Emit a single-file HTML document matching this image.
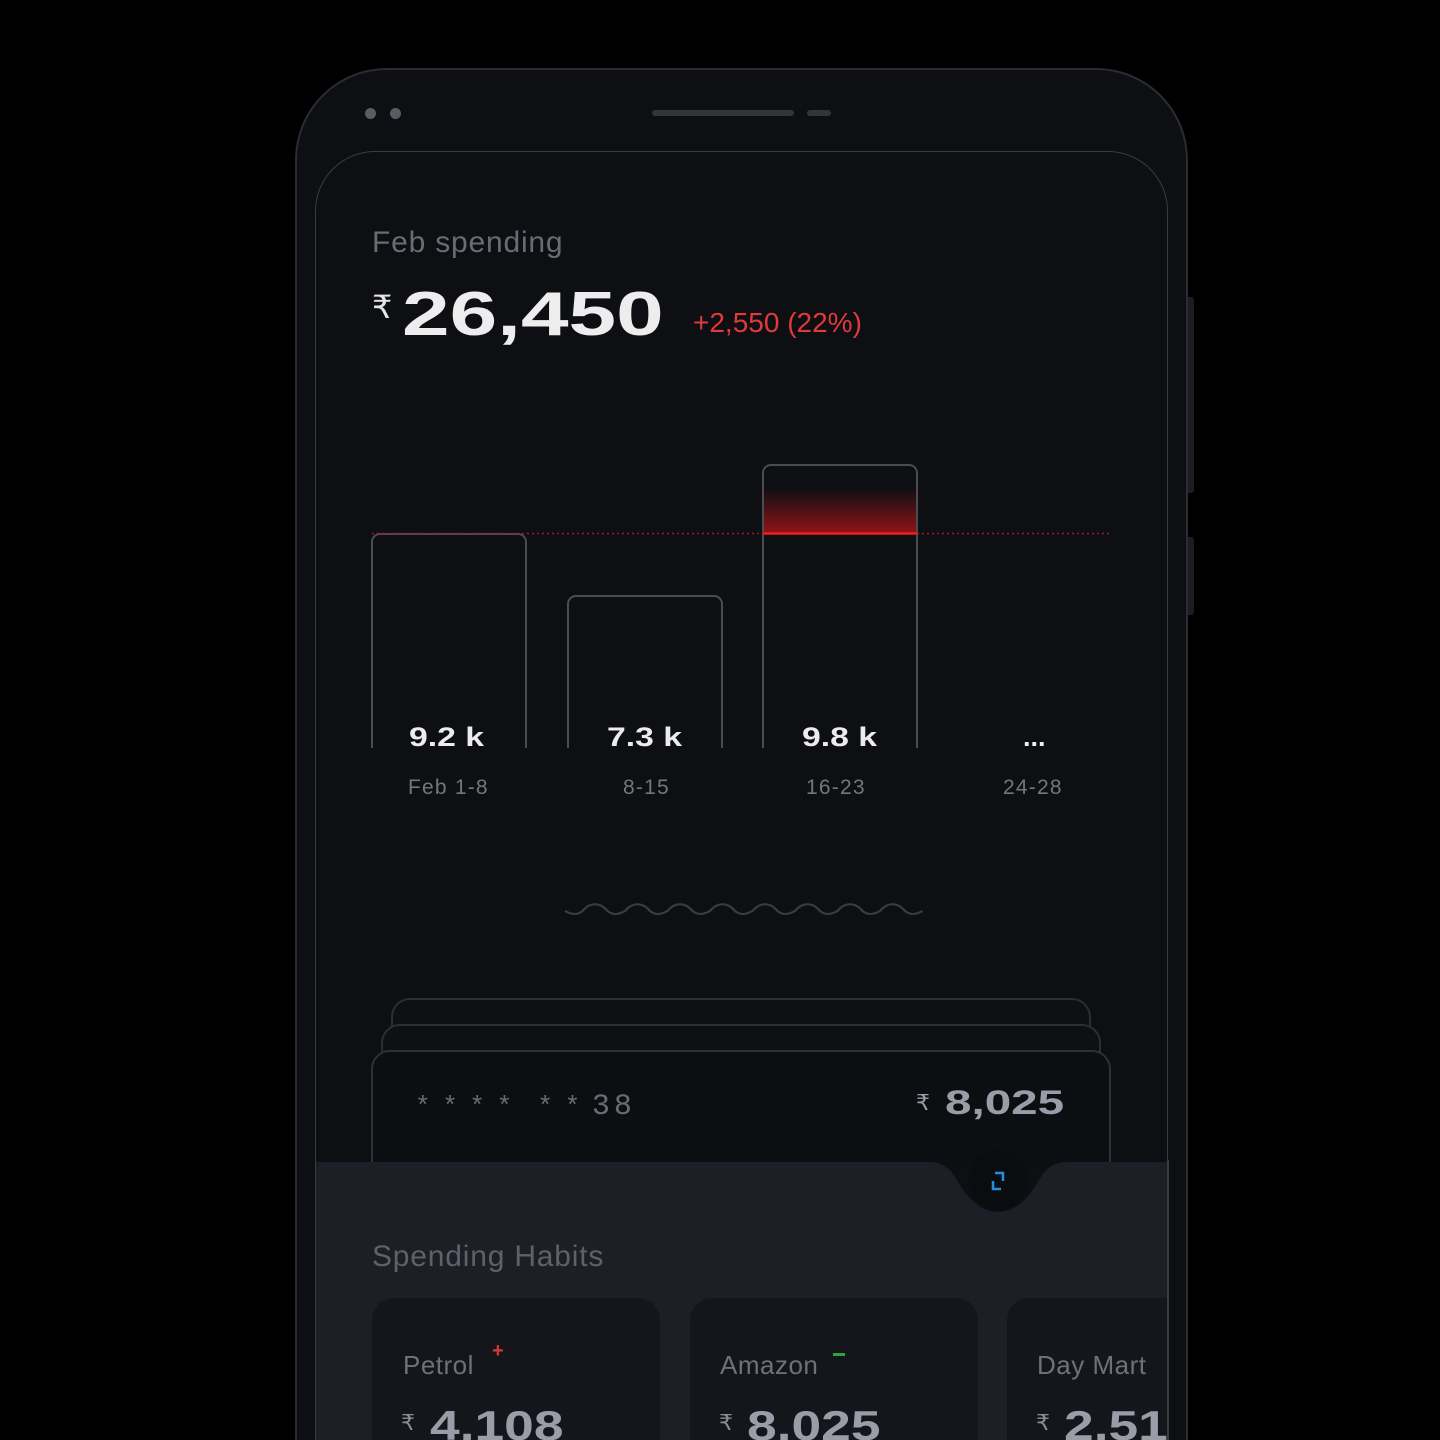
<!DOCTYPE html>
<html><head><meta charset="utf-8"><style>
*{margin:0;padding:0;box-sizing:border-box}
html{width:1440px;height:1440px;overflow:hidden;background:#000}
body{width:1440px;height:1440px;background:#000;position:relative;overflow:hidden;font-family:"Liberation Sans",sans-serif}
.a{position:absolute}
.wide{display:inline-block;transform-origin:left center;font-weight:bold}
</style></head><body>
<div class="a" style="left:295px;top:68px;width:893px;height:1372px;border:2px solid #2a2c32;border-bottom:none;border-radius:92px 92px 0 0;background:#0e0f13"></div>
<div class="a" style="left:1188px;top:297px;width:6px;height:196px;background:#1c1d22;border-radius:0 3px 3px 0"></div>
<div class="a" style="left:1188px;top:537px;width:6px;height:78px;background:#1c1d22;border-radius:0 3px 3px 0"></div>
<div class="a" style="left:365px;top:108px;width:11px;height:11px;border-radius:50%;background:#5a5c63"></div>
<div class="a" style="left:390px;top:108px;width:11px;height:11px;border-radius:50%;background:#5a5c63"></div>
<div class="a" style="left:652px;top:110px;width:142px;height:6px;border-radius:3px;background:#33353b"></div>
<div class="a" style="left:807px;top:110px;width:24px;height:6px;border-radius:3px;background:#33353b"></div>
<div class="a" style="left:315px;top:151px;width:853px;height:1289px;border:1.5px solid #3a3c43;border-bottom:none;border-radius:60px 60px 0 0;background:#0e0f13"></div>
<div class="a" style="left:372px;top:226px;font-size:30px;color:#6a6c74;letter-spacing:0.8px">Feb spending</div>
<div class="a" style="left:372px;top:288px;font-size:32px;color:#e6e6e8">₹</div>
<div class="a" style="left:402px;top:279px;font-size:62px;color:#ededee;line-height:72px"><span class="wide" style="transform:scaleX(1.38)">26,450</span></div>
<div class="a" style="left:693px;top:307px;font-size:28px;color:#e0393b">+2,550 (22%)</div>

<svg class="a" style="left:0;top:0" width="1440" height="1440">
<defs><linearGradient id="g" x1="0" y1="0" x2="0" y2="1"><stop offset="0" stop-color="#c01518" stop-opacity="0"/><stop offset="1" stop-color="#c01518" stop-opacity="0.75"/></linearGradient></defs>
<path d="M372 748V542a8 8 0 0 1 8-8h138a8 8 0 0 1 8 8v206" fill="none" stroke="#4a4c53" stroke-width="2"/>
<path d="M568 748V604a8 8 0 0 1 8-8h138a8 8 0 0 1 8 8v144" fill="none" stroke="#4a4c53" stroke-width="2"/>
<path d="M763 748V473a8 8 0 0 1 8-8h138a8 8 0 0 1 8 8v275" fill="none" stroke="#4a4c53" stroke-width="2"/>
<rect x="764" y="488" width="152" height="46" fill="url(#g)"/>
<line x1="372" y1="533.5" x2="1112" y2="533.5" stroke="#a31a1c" stroke-width="1.5" stroke-dasharray="2 3"/>
<line x1="763" y1="533.5" x2="917" y2="533.5" stroke="#f01e22" stroke-width="2.5"/>
<g transform="translate(565 0) scale(1.25 1) translate(-565 0)">
<path d="M565 911 c6 4 10 4 14 0 c6 -9 14 -9 20 0 c4 4 8 4 14 0 c6 -9 14 -9 20 0 c4 4 8 4 14 0 c6 -9 14 -9 20 0 c4 4 8 4 14 0 c6 -9 14 -9 20 0 c4 4 8 4 14 0 c6 -9 14 -9 20 0 c4 4 8 4 14 0 c6 -9 14 -9 20 0 c4 4 8 4 14 0 c6 -9 14 -9 20 0 c4 4 8 4 14 0 c6 -9 14 -9 20 0 c4 4 8 4 14 0" fill="none" stroke="#3a3c43" stroke-width="2"/>
</g>
<path d="M392 1160V1017a18 18 0 0 1 18-18h662a18 18 0 0 1 18 18v143" fill="#0f1014" stroke="#2c2e34" stroke-width="2"/>
<path d="M382 1160V1043a18 18 0 0 1 18-18h682a18 18 0 0 1 18 18v117" fill="#0f1014" stroke="#2c2e34" stroke-width="2"/>
<path d="M372 1165V1069a18 18 0 0 1 18-18h702a18 18 0 0 1 18 18v96" fill="#0d0e12" stroke="#2e3036" stroke-width="2"/>
<path d="M316 1162H930q18 0 28 20q18 30 40 30q22 0 40 -30q10 -20 28 -20H1167V1440H316Z" fill="#1e1f26"/>
<circle cx="998" cy="1180" r="30" fill="#0b0c10"/>
<path d="M995 1173h8v8M1001 1189h-8v-8" fill="none" stroke="#1f8fe0" stroke-width="2.5"/>
</svg>
<div class="a" style="left:409px;top:722px;font-size:27px;color:#ececee"><span class="wide" style="transform:scaleX(1.25)">9.2 k</span></div>
<div class="a" style="left:607px;top:722px;font-size:27px;color:#ececee"><span class="wide" style="transform:scaleX(1.25)">7.3 k</span></div>
<div class="a" style="left:802px;top:722px;font-size:27px;color:#ececee"><span class="wide" style="transform:scaleX(1.25)">9.8 k</span></div>
<div class="a" style="left:1023px;top:722px;font-size:27px;color:#ececee;font-weight:bold">...</div>
<div class="a" style="left:408px;top:776px;font-size:21px;color:#74767d;letter-spacing:1.2px">Feb 1-8</div>
<div class="a" style="left:623px;top:776px;font-size:21px;color:#74767d;letter-spacing:1.2px">8-15</div>
<div class="a" style="left:806px;top:776px;font-size:21px;color:#74767d;letter-spacing:1.2px">16-23</div>
<div class="a" style="left:1003px;top:776px;font-size:21px;color:#74767d;letter-spacing:1.2px">24-28</div>
<div class="a" style="left:415px;top:1090px;font-size:26px;color:#6a6c74;font-family:'Liberation Mono',monospace;white-space:pre;letter-spacing:-2px">* * * *  * * <span style="font-size:30px;letter-spacing:4px">38</span></div>
<div class="a" style="left:916px;top:1090px;font-size:22px;color:#9a9ca6">₹</div>
<div class="a" style="left:945px;top:1084px;font-size:34px;color:#9a9ca8"><span class="wide" style="transform:scaleX(1.4)">8,025</span></div>
<div class="a" style="left:372px;top:1240px;font-size:30px;color:#5f6169;letter-spacing:0.8px">Spending Habits</div>
<div class="a" style="left:372px;top:1298px;width:288px;height:142px;border-radius:22px 22px 0 0;background:#15161b"></div>
<div class="a" style="left:690px;top:1298px;width:288px;height:142px;border-radius:22px 22px 0 0;background:#15161b"></div>
<div class="a" style="left:1007px;top:1298px;width:160px;height:142px;border-radius:22px 0 0 0;background:#15161b"></div>
<div class="a" style="left:403px;top:1350px;font-size:26px;color:#6f717a;letter-spacing:0.5px">Petrol</div>
<div class="a" style="left:492px;top:1340px;font-size:20px;color:#d23a36;font-weight:bold">+</div>
<div class="a" style="left:720px;top:1350px;font-size:26px;color:#6f717a;letter-spacing:0.5px">Amazon</div>
<div class="a" style="left:833px;top:1353px;width:12px;height:3px;background:#2fa43c"></div>
<div class="a" style="left:1037px;top:1350px;font-size:26px;color:#6f717a;letter-spacing:0.5px">Day Mart</div>
<div class="a" style="left:0;top:1400px;width:1440px;height:40px;overflow:hidden">
<div class="a" style="left:401px;top:10px;font-size:22px;color:#8a8c96">₹</div>
<div class="a" style="left:430px;top:2px;font-size:42px;color:#9a9ca8;line-height:48px"><span class="wide" style="transform:scaleX(1.27)">4,108</span></div>
<div class="a" style="left:719px;top:10px;font-size:22px;color:#8a8c96">₹</div>
<div class="a" style="left:747px;top:2px;font-size:42px;color:#9a9ca8;line-height:48px"><span class="wide" style="transform:scaleX(1.27)">8,025</span></div>
<div class="a" style="left:1036px;top:10px;font-size:22px;color:#8a8c96">₹</div>
<div class="a" style="left:1064px;top:2px;width:103px;overflow:hidden;font-size:42px;line-height:48px;color:#9a9ca8;white-space:nowrap"><span class="wide" style="transform:scaleX(1.27)">2,510</span></div>
</div>
<div class="a" style="left:1167px;top:1160px;width:2px;height:280px;background:#3a3c43"></div>
</body></html>
